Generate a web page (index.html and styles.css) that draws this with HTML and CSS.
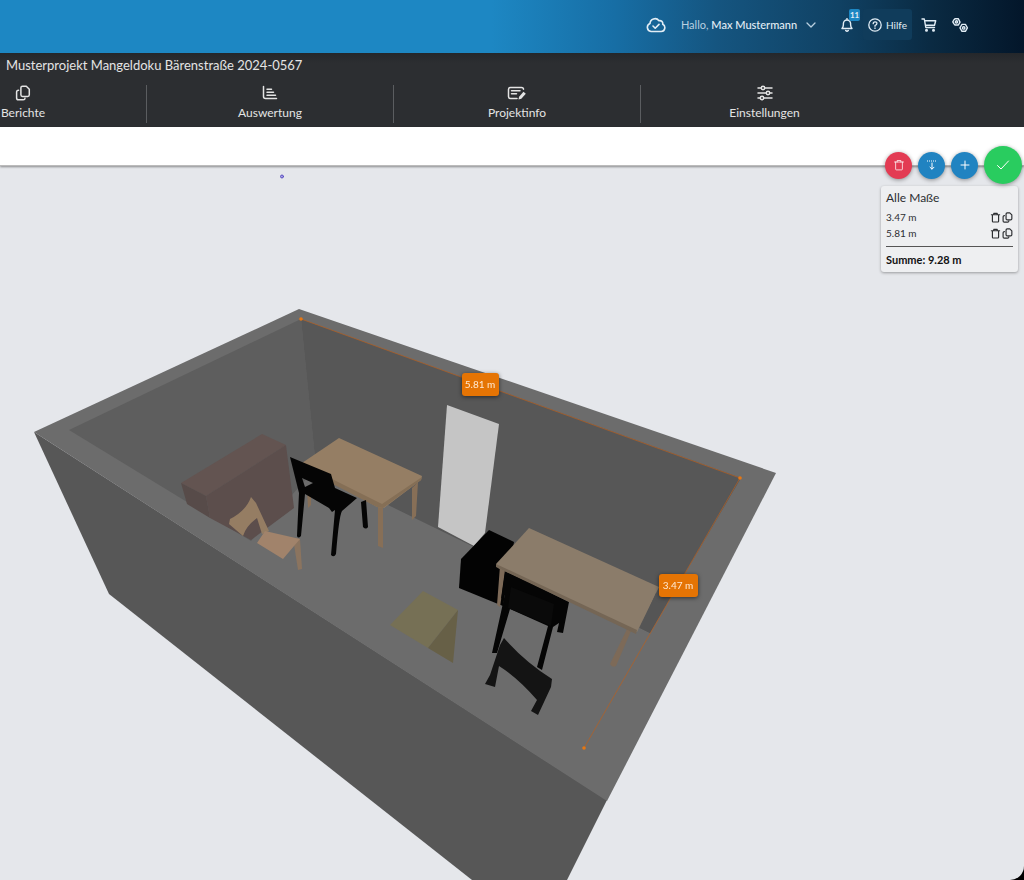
FILE: index.html
```html
<!DOCTYPE html>
<html lang="de">
<head>
<meta charset="utf-8">
<meta name="viewport" content="width=device-width, initial-scale=1">
<title>Musterprojekt Mangeldoku Bärenstraße 2024-0567</title>
<link rel="stylesheet" href="styles.css">
</head>
<body>
<svg class="defs" aria-hidden="true">
  <symbol id="trash" viewBox="0 0 16 16"><path d="M2 4h12M5.5 4V2h5v2M3.5 4v9.5q0 1 1 1h7q1 0 1-1V4"/></symbol>
  <symbol id="copy" viewBox="0 0 16 16"><path d="M7.5 1.2h3.8l3 3v5.6q0 1.6-1.6 1.6H7.5q-1.6 0-1.6-1.6V2.8q0-1.6 1.6-1.6zM3.6 5.2q-2 0-2 1.8v6q0 1.8 1.8 1.8h4.8q1.8 0 1.8-1.6"/></symbol>
</svg>
<div class="app">
  <header class="topbar">
    <button class="icon-btn cloud" aria-label="Synchronisiert">
      <svg viewBox="0 0 20 16" width="20" height="16"><path d="M5 14.5h10.2a3.8 3.8 0 0 0 1.5-7.2 3 3 0 0 0-3.7-3.6A5 5 0 0 0 4 6.600 4.100 4.100 0 0 0 5 14.500zM7 9l2.200 2.200L13 7.400"/></svg>
    </button>
    <button class="user"><span>Hallo, <b>Max Mustermann</b></span>
      <svg viewBox="0 0 10 6" width="10" height="6"><path d="M1 1l4 4 4-4"/></svg>
    </button>
    <button class="icon-btn bell" aria-label="Benachrichtigungen">
      <svg viewBox="0 0 12 14" width="12" height="14"><path d="M6 .5v1.300M1 10.500h10Q9.600 9 9.600 6.500V5.600a3.600 3.600 0 0 0-7.200 0v.9Q2.400 9 1 10.500zM4.700 12.500q1.300 1.300 2.600 0"/></svg>
      <span class="badge">11</span>
    </button>
    <button class="help">
      <svg viewBox="0 0 14 14" width="14" height="14"><circle cx="7" cy="7" r="6.200"/><path d="M5.200 5.700q0-1.900 1.900-1.900t1.800 1.600Q8.900 6.500 7 7.500v.8M7 9.900v.5"/></svg>
      <span>Hilfe</span>
    </button>
    <button class="icon-btn cart" aria-label="Warenkorb">
      <svg viewBox="0 0 16 14" width="16" height="14"><path d="M1 1h2.300l1.500 8.500h8.700M3.700 2.800h11l-1.200 4.400H4.500"/><circle cx="5.500" cy="12.300" r=".8"/><circle cx="12.500" cy="12.300" r=".8"/></svg>
    </button>
    <button class="icon-btn gears" aria-label="Verwaltung">
      <svg viewBox="0 0 16 14" width="16" height="14"><path d="M3 .7h3.200l.8 1.500 1 1.900-1 1.800-.8 1.100H3L1.800 5.600.8 3.900l1-1.900zM10 6.400h3.400l1 1.600 1 1.900-1 1.800-1 1.600H10l-1-1.600-1-1.800 1-1.900z"/><circle cx="4.500" cy="3.900" r="1.100"/><circle cx="11.700" cy="9.900" r="1.200"/></svg>
    </button>
  </header>

  <section class="project">
    <h1 class="project-title">Musterprojekt Mangeldoku Bärenstraße 2024-0567</h1>
    <nav class="tabs" aria-label="Projekt">
      <a class="tab" href="#berichte">
        <svg viewBox="0 0 16 16" width="16" height="16"><use href="#copy"/></svg>Berichte</a>
      <a class="tab" href="#auswertung">
        <svg viewBox="0 0 16 16" width="16" height="16"><path d="M1.500 1.500v10q0 2 2 2h11M5 4.200h4.500M5 7.200h6.500M5 10.200h8.500"/></svg>Auswertung</a>
      <a class="tab" href="#projektinfo">
        <svg viewBox="0 0 20 16" width="20" height="16"><path d="M10 13.500H3.500q-2 0-2-2v-7q0-2 2-2h11q2 0 2 1.800M4.500 5.800h8.500M4.500 8.800h5"/><path class="pen" d="M11.500 14.500l.6-2.800 4.400-5 2.300 2-4.500 5z"/></svg>Projektinfo</a>
      <a class="tab" href="#einstellungen">
        <svg viewBox="0 0 16 16" width="16" height="16"><path d="M1 3h3M8 3h7M1 8h8M13 8h2M1 13h2M7 13h8"/><circle cx="6" cy="3" r="1.700"/><circle cx="11" cy="8" r="1.700"/><circle cx="5" cy="13" r="1.700"/></svg>Einstellungen</a>
    </nav>
  </section>

  <main class="workspace">
    <div class="toolbar"></div>
    <svg class="scene" viewBox="0 166 1024 714" preserveAspectRatio="xMidYMin slice" role="img" aria-label="3D-Raumansicht">
      <circle cx="282" cy="176.500" r="1.500" fill="#aaa3e8" stroke="#5a4fc0"/>
      <!-- walls and floor -->
      <path fill="#575757" d="M34 432 109 594 472 880H567L607 800z"/>
      <path fill="#6c6c6c" d="M34 432 299 309 776 473 607 801z"/>
      <path fill="#5e5e5e" d="M69 430 301 319 316 468 251 541z"/>
      <path fill="#575757" d="M301 319 741 478 650 633 390 506 316 468z"/>

      <!-- cabinet -->
      <path fill="#635451" d="M181 483 262 434 286 445 206 496z"/>
      <path fill="#574b49" d="M181 483 206 496 210 518 187 504z"/>
      <path fill="#5c4e4c" d="M206 496 286 445 294 508 251 540 210 518z"/>

      <!-- light chair -->
      <path fill="#8b745f" d="M293 538 300 539 302 569 298 570z"/>
      <path fill="#957d63" d="M251 497 256 503 269 531 262 534 257 518Q246 526 243 536L229 524 230 519Q246 511 251 497z"/>
      <path fill="#a1836b" d="M265 531 300 539 283 559 257 543z"/>

      <!-- table with black chair -->
      <path fill="#876f57" d="M307 488h4v17l-3 3zM412 488l6-6-2 34-4 4zM378 506h5v42l-5-2z"/>
      <path fill="#957e64" d="M302 463 339 438 422 476 421 480 384 508 377 507 302 465z"/>
      <path fill="#856f56" d="M302 464 382 504 422 477 421 480 383 508 377 507 302 468z"/>
      <path fill="#050505" fill-rule="evenodd" d="M290 457 331 474 335 488 357 498 342 511Q339 516 336 554 334 558 331 555L335 510 332 512 329 508 305 494 301 536Q298 539 297 536L299 493zM302 478 305 487 313 483zM361 502l5-2 2 27q-2 3-5 0z"/>

      <!-- door -->
      <path fill="#c5c5c5" d="M447 405 499 424 485 533 474 546 438 527z"/>

      <!-- desk, drawer unit and black chairs -->
      <path fill="#030303" d="M461 559 489 530 514 542 503 606 459 588z"/>
      <path fill="#7d6a58" d="M500 566h6l-6 41-3-2zM627 629l-17 35q2 4 6 2l15-35z"/>
      <path fill="#050505" d="M505 570 569 602 563 633 557 632 559 623 553 627 542 670 537 667 548 626 510 609 497 653 492 653 505 594 501 599z"/>
      <path fill="#0a0a0a" d="M511 587 554 604 551 626 508 608z"/>
      <path fill="#8b7c6a" d="M496 564 529 528 659 587 637 632 498 568z"/>
      <path fill="#756655" d="M496 564 637 630 636 634 496 567z"/>
      <path fill="#555" d="M656 593 668 600 650 633 640 628z"/>
      <path fill="#141414" d="M504 638Q525 662 552 679L551 687 538 715 531 711 537 700Q518 678 499 666L495 687 485 684 490 675 500 645z"/>
      <!-- stool -->
      <path fill="#767055" d="M423 591 458 610 428 648 390 625z"/>
      <path fill="#676047" d="M458 610 453 663 428 648z"/>

      <!-- measured lines -->
      <path fill="none" stroke="#b8601f" stroke-opacity=".7" d="M301 319 740 478 584 748"/>
      <g fill="#e57713"><circle cx="301" cy="319" r="1.800"/><circle cx="740" cy="478" r="1.800"/><circle cx="584" cy="748" r="1.800"/></g>
      <g class="measure"><rect x="462" y="373" width="37" height="23" rx="3"/><text x="480" y="388">5.81 m</text></g>
      <g class="measure"><rect x="659" y="574" width="39" height="23" rx="3"/><text x="678" y="589">3.47 m</text></g>
    </svg>

    <aside class="tools">
      <div class="actions">
        <button class="round red" aria-label="Löschen"><svg width="12" height="12"><use href="#trash"/></svg></button>
        <button class="round" aria-label="Auf Boden ausrichten"><svg viewBox="0 0 12 12" width="12" height="12"><path d="M6 4v6M4 8.200l2 2 2-2"/><path stroke-dasharray="1 1" stroke-linecap="butt" d="M1 2h10"/></svg></button>
        <button class="round" aria-label="Hinzufügen"><svg viewBox="0 0 12 12" width="12" height="12"><path d="M6 2v8M2 6h8"/></svg></button>
        <button class="round big" aria-label="Fertig"><svg viewBox="0 0 14 12" width="14" height="12"><path d="M1.500 6.500l3.500 3.500L12.500 2"/></svg></button>
      </div>
      <section class="panel">
        <h2>Alle Maße</h2>
        <ul>
          <li><span>3.47 m</span>
            <button aria-label="3.47 m löschen"><svg width="11" height="11"><use href="#trash"/></svg></button>
            <button aria-label="3.47 m kopieren"><svg width="11" height="11"><use href="#copy"/></svg></button></li>
          <li><span>5.81 m</span>
            <button aria-label="5.81 m löschen"><svg width="11" height="11"><use href="#trash"/></svg></button>
            <button aria-label="5.81 m kopieren"><svg width="11" height="11"><use href="#copy"/></svg></button></li>
        </ul>
        <p class="sum">Summe: 9.28 m</p>
      </section>
    </aside>
  </main>
</div>
</body>
</html>
```
FILE: styles.css
```css
* { box-sizing: border-box; }
body {
  margin: 0;
  background: #000;
  color: #2c2e31;
  font-family: Lato, "Open Sans", sans-serif;
  font-size: 11px;
}
button {
  display: flex;
  align-items: center;
  padding: 0;
  border: 0;
  background: none;
  color: inherit;
  font: inherit;
  cursor: pointer;
}
svg { display: block; fill: none; stroke: currentColor; stroke-linecap: round; stroke-linejoin: round; }
.defs { position: absolute; width: 0; height: 0; }
.app {
  display: flex;
  flex-direction: column;
  min-height: 100vh;
  overflow: hidden;
  border-bottom-right-radius: 14px;
  background: #e5e7eb;
}

.topbar {
  display: flex;
  align-items: center;
  justify-content: flex-end;
  height: 53px;
  padding: 0 56px 4px 16px;
  background: linear-gradient(90deg, #1d87c3 48%, #176ea5 60%, #155580 70%, #104163 82%, #0a2a42 91%, #03162a);
  color: #e2edf5;
}
.icon-btn svg { stroke-width: 1.4; }
.cloud { margin-right: 15px; }
.cloud svg { stroke-width: 1.6; }
.user { gap: 9px; margin-right: 25px; color: #b9d0e0; }
.user svg { stroke-width: 1.3; }
.user b { color: #e2edf5; font-weight: 500; }
.bell { position: relative; margin-right: 10px; }
.badge {
  position: absolute;
  top: -9px;
  left: 8px;
  width: 11px;
  border-radius: 2px;
  background: #1d87c3;
  font-size: 8px;
  font-weight: 700;
  line-height: 12px;
  text-align: center;
}
.help {
  gap: 4px;
  height: 31px;
  margin-right: 9px;
  padding: 0 5px;
  border-radius: 3px;
  background: #103c5b;
  font-size: 10px;
}
.help svg { stroke-width: 1.3; }
.cart { margin-right: 15px; }

.project {
  height: 74px;
  background: linear-gradient(#24272b, #2c2e31 10px);
  color: #e4e4e4;
}
.project-title {
  margin: 0;
  padding: 4px 6px 0;
  font-size: 13px;
  font-weight: 400;
  line-height: 16px;
}
.tabs {
  display: grid;
  grid-template-columns: repeat(4, 1fr);
  margin: 12px 0 0 -100px;
  padding-right: 136px;
}
.tab {
  display: flex;
  flex-direction: column;
  align-items: center;
  gap: 4px;
  height: 38px;
  border-right: 1px solid #5b5d60;
  color: inherit;
  font-size: 12px;
  line-height: 16px;
  text-decoration: none;
}
.tab:last-child { border-right: 0; }
.tab svg { stroke-width: 1.5; }
.tab .pen { fill: currentColor; stroke: none; }

.workspace { position: relative; display: flex; flex: 1; flex-direction: column; }
.toolbar {
  position: relative;
  height: 39px;
  border-bottom: 1px solid #bbb;
  background: #fff;
  box-shadow: 0 1px 2px #0006;
}
.scene { flex: 1; width: 100%; min-height: 0; stroke: none; }
.measure { filter: drop-shadow(0 1px 2px #0008); }
.measure rect { fill: #e57404; }
.measure text { fill: #ffe9d2; font-size: 10px; text-anchor: middle; }

.tools { position: absolute; top: 19px; right: 2px; }
.actions { display: flex; align-items: center; gap: 6px; }
.round {
  justify-content: center;
  width: 27px;
  height: 27px;
  border-radius: 50%;
  background: #2083c1;
  box-shadow: 0 1px 4px #0006;
  color: #fff;
}
.red { background: #e33b53; }
.big { width: 38px; height: 38px; background: #29cc5f; }
.panel {
  margin: 2px 4px 0 -4px;
  padding: 4px 5px;
  border-radius: 3px;
  background: #eeeff1;
  box-shadow: 0 1px 3px #0005;
}
.panel h2 { margin: 0 0 3px; font-size: 12px; font-weight: 400; line-height: 16px; }
.panel ul {
  margin: 0;
  padding: 0 0 5px;
  border-bottom: 1px solid #555;
  list-style: none;
}
.panel li { display: flex; align-items: center; gap: 1px; font-size: 10px; line-height: 16px; }
.panel li span { margin-right: auto; }
.panel li svg { stroke-width: 1.7; }
.sum { margin: 5px 0 0; color: #111; font-weight: 700; line-height: 16px; }
```
